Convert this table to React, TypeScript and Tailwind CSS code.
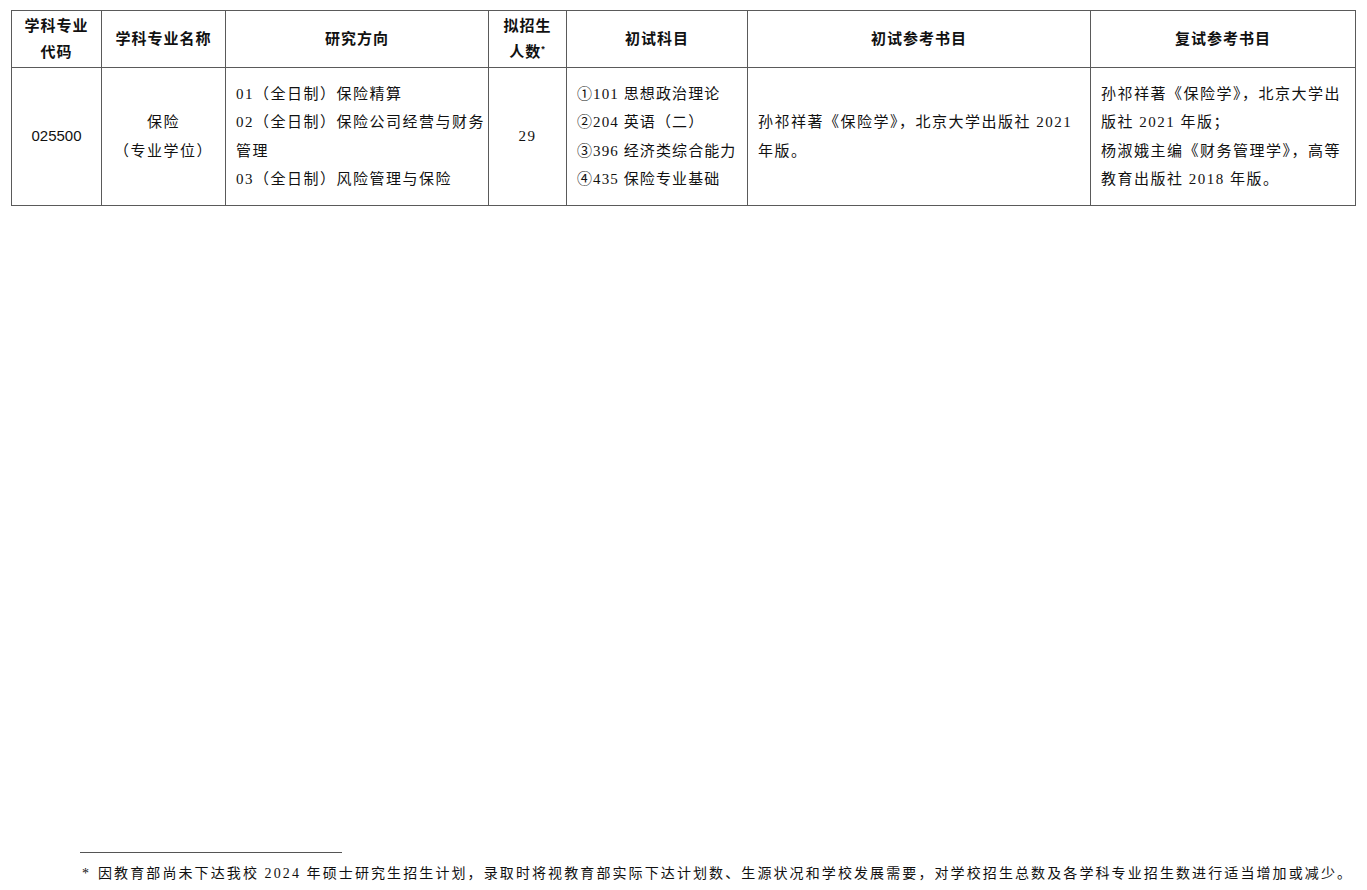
import React from "react";

const serif = "font-['Liberation_Serif','Noto_Sans_CJK_SC',serif]";
const sans = "font-['Liberation_Sans','Noto_Sans_CJK_SC',sans-serif]";

const headers: React.ReactNode[] = [
  <>学科专业<br />代码</>,
  "学科专业名称",
  "研究方向",
  <>拟招生<br />人数<sup className="text-[9px] -top-[5px]">*</sup></>,
  "初试科目",
  "初试参考书目",
  "复试参考书目",
];

const widths = [90, 124, 263, 78, 181, 343, 265];

const Lines: React.FC<{ lines: string[] }> = ({ lines }) => (
  <>
    {lines.map((l, i) => (
      <div key={i} className="whitespace-nowrap">
        {l}
      </div>
    ))}
  </>
);

export default function App() {
  const cell = "border border-[#5a5a5a] align-middle";
  return (
    <div className="min-h-[890px] flex flex-col bg-white text-[#111]">
      <table className="table-fixed border-collapse ml-[11px] mt-[10px] w-[1344px]">
        <colgroup>
          {widths.map((w, i) => (
            <col key={i} style={{ width: w }} />
          ))}
        </colgroup>
        <thead>
          <tr className="h-[57px]">
            {headers.map((h, i) => (
              <th
                key={i}
                className={`${cell} ${sans} font-bold text-[15px] tracking-[1px] leading-[26px] text-center`}
              >
                {h}
              </th>
            ))}
          </tr>
        </thead>
        <tbody>
          <tr className={`h-[138px] ${serif} text-[15px] tracking-[1.5px] leading-[28.5px]`}>
            <td className={`${cell} ${sans} text-center tracking-normal`}>025500</td>
            <td className={`${cell} text-center`}>
              <div>保险</div>
              <div>（专业学位）</div>
            </td>
            <td className={`${cell} px-[10px]`}>
              <Lines
                lines={[
                  "01（全日制）保险精算",
                  "02（全日制）保险公司经营与财务",
                  "管理",
                  "03（全日制）风险管理与保险",
                ]}
              />
            </td>
            <td className={`${cell} text-center`}>29</td>
            <td className={`${cell} px-[10px] tracking-[1.1px]`}>
              <Lines
                lines={[
                  "①101 思想政治理论",
                  "②204 英语（二）",
                  "③396 经济类综合能力",
                  "④435 保险专业基础",
                ]}
              />
            </td>
            <td className={`${cell} px-[10px]`}>
              <Lines lines={["孙祁祥著《保险学》，北京大学出版社 2021", "年版。"]} />
            </td>
            <td className={`${cell} px-[10px]`}>
              <Lines
                lines={[
                  "孙祁祥著《保险学》，北京大学出",
                  "版社 2021 年版；",
                  "杨淑娥主编《财务管理学》，高等",
                  "教育出版社 2018 年版。",
                ]}
              />
            </td>
          </tr>
        </tbody>
      </table>

      <div className="mt-auto pl-[80px] pb-[6px]">
        <div className="w-[262px] border-t border-[#555]" />
        <div
          className={`${serif} text-[14px] tracking-[2.1px] leading-[20px] mt-[11px] whitespace-nowrap flex`}
        >
          <span className="w-[18px] shrink-0 pl-[2px]">*</span>
          <span>
            因教育部尚未下达我校 2024 年硕士研究生招生计划，录取时将视教育部实际下达计划数、生源状况和学校发展需要，对学校招生总数及各学科专业招生数进行适当增加或减少。
          </span>
        </div>
      </div>
    </div>
  );
}
